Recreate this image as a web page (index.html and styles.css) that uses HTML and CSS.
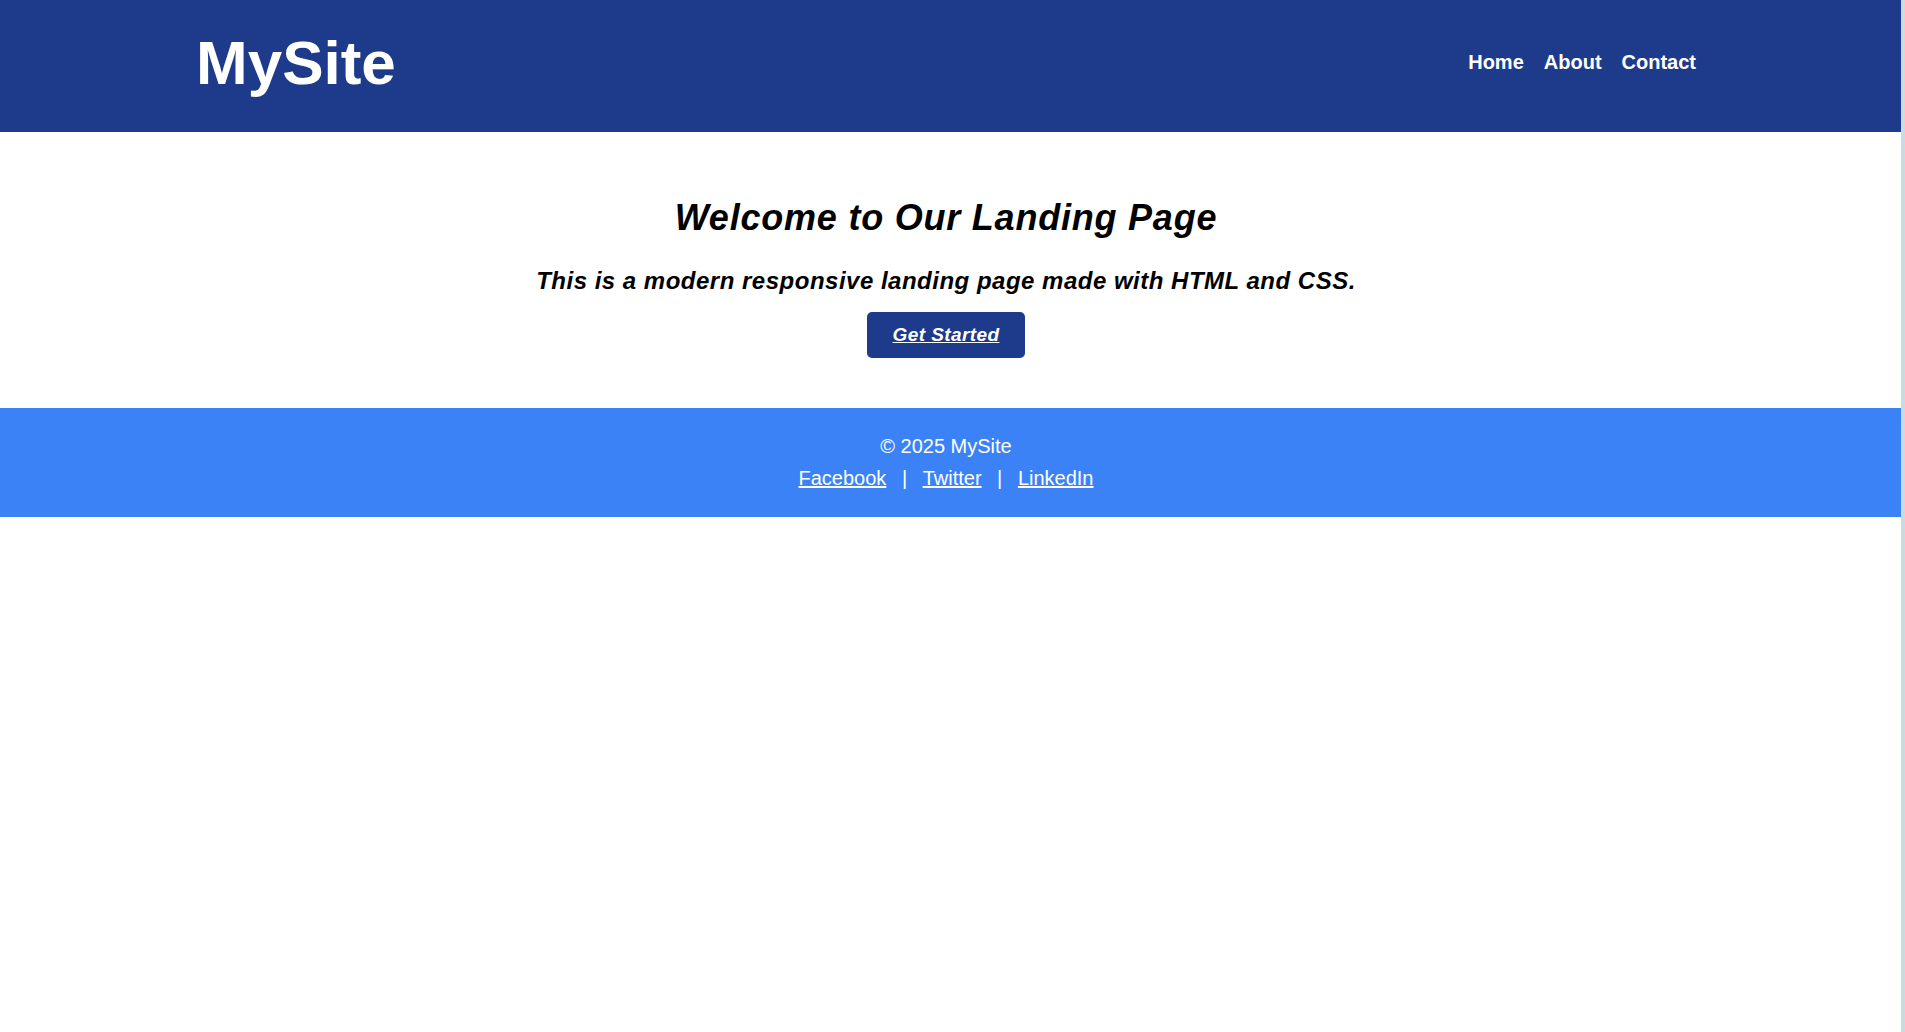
FILE: index.html
```html
<!DOCTYPE html>
<html lang="en">
<head>
<meta charset="utf-8">
<title>MySite</title>
<link rel="stylesheet" href="styles.css">
</head>
<body>
  <header class="site-header">
    <div class="container header-inner">
      <h1 class="logo">MySite</h1>
      <nav class="nav">
        <a href="#" class="nav-link">Home</a>
        <a href="#" class="nav-link">About</a>
        <a href="#" class="nav-link">Contact</a>
      </nav>
    </div>
  </header>
  <main class="hero">
    <h2 class="hero-title">Welcome to Our Landing Page</h2>
    <p class="hero-text">This is a modern responsive landing page made with HTML and CSS.</p>
    <div class="hero-action">
      <a href="#" class="btn">Get Started</a>
    </div>
  </main>
  <footer class="site-footer">
    <p class="footer-line">&copy; 2025 MySite</p>
    <p class="footer-line"><a href="#" class="footer-link">Facebook</a> | <a href="#" class="footer-link">Twitter</a> | <a href="#" class="footer-link">LinkedIn</a></p>
  </footer>
</body>
</html>
```
FILE: styles.css
```css
html {
  background: #ffffff;
}
body {
  margin: 0;
  min-height: 100vh;
  border-right: 4px solid #c9dde0;
  font-family: "Liberation Sans", Arial, sans-serif;
  color: #000;
  background: #fff;
}
.site-header {
  background: #1e3a8a;
  height: 132px;
  box-sizing: border-box;
  padding: 28px 9px 0 0;
}
.container {
  max-width: 1500px;
  margin: 0 auto;
}
.header-inner {
  display: flex;
  justify-content: space-between;
  align-items: flex-start;
}
.logo {
  margin: 0;
  font-size: 62px;
  line-height: 69px;
  font-weight: bold;
  color: #fff;
}
.nav {
  display: flex;
  gap: 20px;
  padding-top: 23px;
}
.nav-link {
  color: #fff;
  text-decoration: none;
  font-weight: bold;
  font-size: 20px;
  line-height: 23px;
}
.hero {
  display: block;
  text-align: center;
  padding: 65px 9px 50px 0;
}
.hero-title {
  margin: 0;
  font-size: 36px;
  line-height: 42px;
  font-weight: bold;
  font-style: italic;
  letter-spacing: 0.78px;
}
.hero-text {
  margin: 28px 0 0;
  font-size: 24px;
  line-height: 28px;
  font-weight: bold;
  font-style: italic;
  letter-spacing: 0.5px;
}
.hero-action {
  display: flex;
  justify-content: center;
  margin-top: 17px;
}
.btn {
  display: block;
  background: #1e3a8a;
  color: #fff;
  font-size: 19px;
  line-height: 22px;
  font-weight: bold;
  font-style: italic;
  letter-spacing: 0.4px;
  padding: 12px 26px;
  border-radius: 5px;
  text-decoration: underline;
}
.site-footer {
  background: #3b82f6;
  color: #fff;
  text-align: center;
  padding: 22px 9px 23px 0;
  font-size: 20px;
  line-height: 32px;
}
.footer-line {
  margin: 0;
}
.footer-link {
  color: #fff;
  text-decoration: underline;
  margin: 0 10px;
}
```
